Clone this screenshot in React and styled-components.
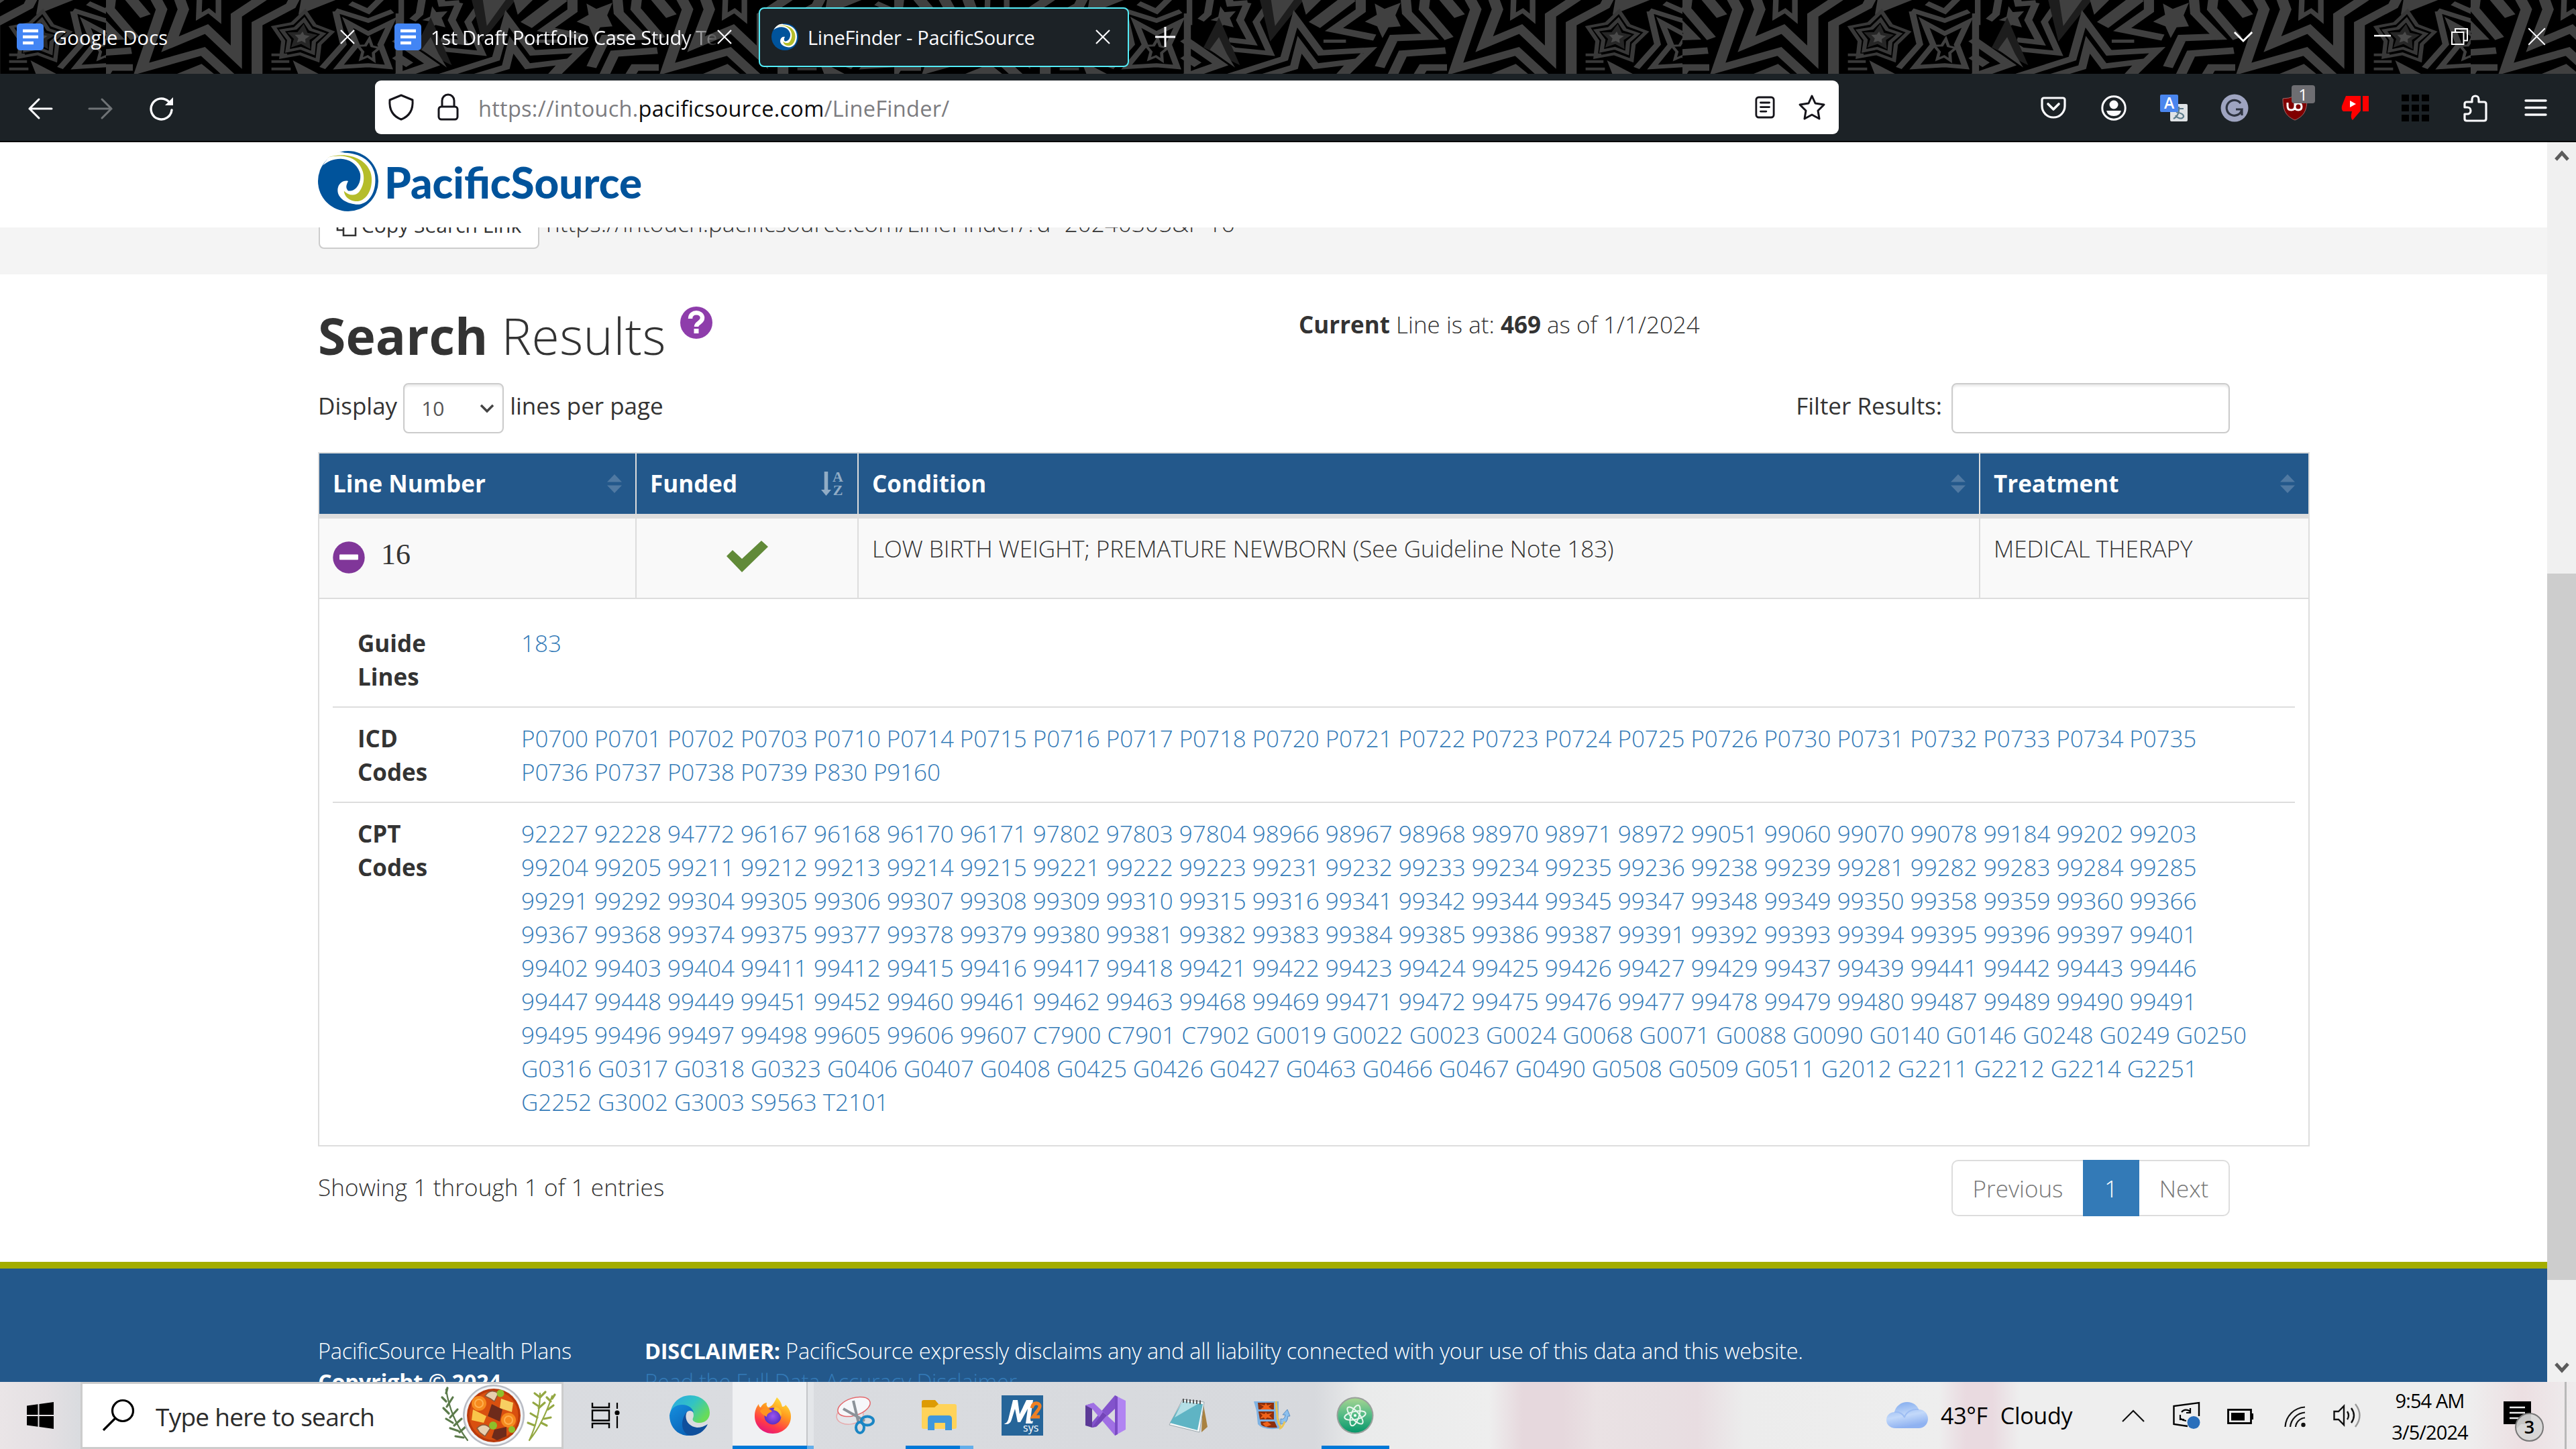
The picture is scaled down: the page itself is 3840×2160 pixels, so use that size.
import React from "react";
import styled, { createGlobalStyle } from "styled-components";

const Global = createGlobalStyle`
  * { box-sizing: border-box; }
  html, body { margin: 0; padding: 0; background: #fff; }
  body { width: 3840px; height: 2160px; overflow: hidden; }
  h1, p, ul { margin: 0; padding: 0; }
  svg { display: block; flex: none; overflow: visible; }
`;

const sans = `"Open Sans", "Noto Sans", "Liberation Sans", sans-serif`;

const Screen = styled.div`
  width: 3840px;
  height: 2160px;
  display: flex;
  flex-direction: column;
  overflow: hidden;
  font-family: ${sans};
  color: #333;
`;

/* ---------- browser chrome ---------- */

const TabStrip = styled.div`
  position: relative;
  height: 110px;
  background: #000;
  display: flex;
  align-items: center;
  color: #fbfbfe;
`;
const ThemeArt = styled.svg`
  position: absolute;
  left: 0;
  top: 0;
`;
const Tab = styled.div`
  position: relative;
  display: flex;
  align-items: center;
  width: ${(p) => p.$w}px;
  height: 89px;
  padding: 0 26px 0 ${(p) => p.$pad}px;
  margin-left: ${(p) => p.$ml || 0}px;
  border-radius: 8px;
  border: 2px solid ${(p) => (p.$active ? "#54ecf7" : "transparent")};
  background: ${(p) => (p.$active ? "#1c2226" : "transparent")};
`;
const TabTitle = styled.span`
  flex: 1;
  margin-left: 14px;
  padding-top: 2px;
  white-space: nowrap;
  overflow: hidden;
  font-size: 29px;
  line-height: 44px;
  letter-spacing: ${(p) => p.$ls || 0}px;
  ${(p) => p.$fade && "-webkit-mask-image: linear-gradient(90deg, #000 88%, rgba(0,0,0,.15) 99%); mask-image: linear-gradient(90deg, #000 88%, rgba(0,0,0,.15) 99%);"}
`;
const StripItem = styled.div`
  position: relative;
  margin-left: ${(p) => p.$ml}px;
  padding-bottom: ${(p) => p.$up || 0}px;
`;

const Toolbar = styled.div`
  height: 102px;
  background: #1c2226;
  border-bottom: 2px solid #070606;
  display: flex;
  align-items: center;
`;
const NavButtons = styled.div`
  width: 559px;
  padding: 3px 0 0 42px;
  display: flex;
  align-items: center;
  gap: 54px;
`;
const UrlBar = styled.div`
  width: 2182px;
  height: 80px;
  border-radius: 9px;
  background: #fff;
  display: flex;
  align-items: center;
  padding: 0 20px;
  gap: 35px;
`;
const UrlText = styled.span`
  flex: 1;
  margin-left: -6px;
  padding-top: 4px;
  font-size: 32.5px;
  line-height: 48px;
  letter-spacing: 0.28px;
  color: #7c7c80;
  white-space: nowrap;
  b { font-weight: 400; color: #0c0c0d; }
`;
const Extensions = styled.div`
  flex: 1;
  display: flex;
  align-items: center;
  justify-content: space-between;
  padding: 1px 39px 0 299px;
`;
const ExtBadge = styled.span`
  position: absolute;
  left: 16px;
  top: -15px;
  width: 35px;
  height: 27px;
  border-radius: 4px;
  background: #6e6e72;
  color: #fff;
  font-size: 24px;
  line-height: 27px;
  text-align: center;
`;
const Ext = styled.div`
  position: relative;
  width: 42px;
  display: flex;
  justify-content: center;
`;

/* ---------- web page ---------- */

const Viewport = styled.div`
  height: 1848px;
  display: flex;
  overflow: hidden;
`;
const Page = styled.div`
  width: 3797px;
  height: 1848px;
  overflow: hidden;
  background: #fff;
`;
const ScrollTrack = styled.div`
  width: 43px;
  background: #f0f0f0;
  display: flex;
  flex-direction: column;
  align-items: center;
  justify-content: space-between;
  padding: 11px 0 12px;
`;
const ScrollThumb = styled.div`
  width: 43px;
  height: 1053px;
  margin-top: 492px;
`;
const ThumbFill = styled.div`
  height: 100%;
  background: #cdcdcd;
`;
const SiteHeader = styled.header`
  height: 127px;
  padding: 13px 0 0 474px;
  background: #fff;
`;
const LinkBand = styled.div`
  height: 70px;
  overflow: hidden;
  background: #f4f4f4;
  padding-left: 475px;
  display: flex;
  align-items: flex-end;
`;
const CopyButton = styled.div`
  width: 329px;
  height: 84px;
  margin-bottom: 38px;
  flex: none;
  border: 2px solid #ccc;
  border-radius: 8px;
  background: #fff;
  display: flex;
  align-items: center;
  justify-content: center;
  gap: 7px;
  padding: 14px 2px 0 0;
  font-size: 30px;
  line-height: 44px;
  white-space: nowrap;
`;
const ShareUrl = styled.span`
  margin: 0 0 51px 10px;
  font-size: 35px;
  font-weight: 300;
  line-height: 50px;
  letter-spacing: 0.1px;
  white-space: nowrap;
`;

const Content = styled.main`
  padding-left: 474px;
  height: 1472px;
`;
const TitleRow = styled.div`
  display: flex;
  height: 162px;
  padding-top: 50px;
  align-items: flex-start;
`;
const Title = styled.h1`
  display: flex;
  align-items: flex-start;
  gap: 21px;
  width: 1462px;
  font-size: 75px;
  font-weight: 300;
  line-height: 82px;
  letter-spacing: 0.5px;
  white-space: nowrap;
  b { font-weight: 700; letter-spacing: 0.1px; }
  svg { margin-top: -2px; }
`;
const Body = styled.p`
  font-size: 35px;
  font-weight: ${(p) => p.$weight || 300};
  line-height: 50px;
  letter-spacing: ${(p) => p.$ls || 0}px;
  white-space: nowrap;
  b { font-weight: 700; }
`;
const Controls = styled.div`
  width: 2850px;
  height: 75px;
  margin-bottom: 28px;
  display: flex;
  align-items: center;
`;
const Label = styled.span`
  font-size: 35px;
  line-height: 50px;
  padding-bottom: 7px;
  white-space: nowrap;
  margin-left: ${(p) => p.$ml || 0};
`;
const Field = styled.div`
  width: ${(p) => p.$w}px;
  height: 75px;
  margin-left: ${(p) => p.$ml}px;
  margin-right: ${(p) => p.$mr || 0}px;
  border: 2px solid #ccc;
  border-radius: 8px;
  box-shadow: inset 0 3px 3px rgba(0, 0, 0, 0.08);
  display: flex;
  align-items: center;
  justify-content: space-between;
  padding: 0 12px 0 25px;
  font-size: 30px;
  font-weight: 400;
  color: #555;
`;

const Table = styled.section`
  width: 2969px;
  border: 2px solid #ddd;
`;
const GridRow = styled.div`
  display: grid;
  grid-template-columns: 473px 331px 1672px 489px;
`;
const HeadRow = styled(GridRow)`
  height: 97px;
  border-bottom: 7px solid #ddd;
  background: #23588b;
`;
const HeadCell = styled.div`
  display: flex;
  align-items: center;
  justify-content: space-between;
  padding: 0 20px;
  border-right: 2px solid #ddd;
  color: #fff;
  font-size: 35px;
  font-weight: 700;
  line-height: 50px;
  &:last-child { border-right: 0; }
`;
const DataRow = styled(GridRow)`
  height: 120px;
  border-bottom: 2px solid #ddd;
  background: #f9f9f9;
`;
const Cell = styled.div`
  display: flex;
  align-items: flex-start;
  justify-content: ${(p) => (p.$center ? "center" : "flex-start")};
  padding: 20px;
  border-right: 2px solid #ddd;
  &:last-child { border-right: 0; }
`;
const LineNo = styled.span`
  margin-left: 24px;
  font-family: "Liberation Serif", "Times New Roman", serif;
  font-size: 44px;
  line-height: 50px;
  padding-top: 9px;
`;
const IconNudge = styled.div`
  padding-top: ${(p) => p.$top}px;
`;
const Details = styled.div`
  padding: 20px;
`;
const DetailRow = styled.div`
  display: flex;
  padding: 21px 0 19px 37px;
  border-top: ${(p) => (p.$first ? "0" : "2px solid #ddd")};
  font-size: 35px;
  line-height: 50px;
`;
const DetailName = styled.div`
  width: 244px;
  font-weight: 700;
`;
const Codes = styled.div`
  font-weight: 300;
  color: #337ab7;
  white-space: nowrap;
`;
const CodeLine = styled.div`
  height: 50px;
  letter-spacing: ${(p) => p.$ls}px;
`;
const TableFoot = styled.div`
  width: 2850px;
  height: 84px;
  margin-top: 20px;
  display: flex;
  align-items: center;
  justify-content: space-between;
  p { padding-bottom: 3px; }
`;
const Pager = styled.div`
  display: flex;
  width: 415px;
  height: 84px;
  border: 2px solid #ddd;
  border-radius: 10px;
`;
const PageLink = styled.span`
  width: ${(p) => p.$w}px;
  margin: ${(p) => (p.$on ? "-2px 0" : "0")};
  background: ${(p) => (p.$on ? "#337ab7" : "transparent")};
  color: ${(p) => (p.$on ? "#fff" : "#777")};
  font-size: 35px;
  font-weight: 300;
  line-height: ${(p) => (p.$on ? 85 : 81)}px;
  text-align: center;
`;
const Footer = styled.footer`
  height: 179px;
  overflow: hidden;
  border-top: 10px solid #a3ad00;
  background: #23588b;
  color: #fff;
  display: flex;
  padding: 100px 0 0 474px;
  font-size: 32.5px;
  font-weight: 300;
  line-height: 46.4px;
  letter-spacing: -0.24px;
  white-space: nowrap;
  b { font-weight: 700; }
`;
const FooterCol = styled.div`
  width: ${(p) => p.$w || "auto"};
`;
const FooterLink = styled.div`
  color: #337ab7;
`;

/* ---------- taskbar ---------- */

const Taskbar = styled.div`
  height: 100px;
  display: flex;
  align-items: center;
  background: linear-gradient(90deg,
    #eae5e7 0, #e4e0e3 70px, #d7dade 130px, #dadce0 1100px, #d7d9dd 1960px, #eaebeb 2030px,
    #eeeeee 2220px, #e6d8dd 2270px, #e6d8dd 2330px, #eae2e4 2380px, #e8dfe2 2480px, #e8dde1 2530px, #ececec 2600px,
    #eeeeee 2890px, #e9dae0 2930px, #e9dae0 2970px, #eeeeee 3010px, #eeeeee 3680px, #ecdfe2 3760px, #eeeced 3840px);
  color: #000;
`;
const StartButton = styled.div`
  width: 120px;
  display: flex;
  justify-content: center;
`;
const SearchBox = styled.div`
  width: 720px;
  height: 100px;
  border: 3px solid #ccc;
  background: #fff;
  display: flex;
  align-items: center;
  padding: 0 6px 0 29px;
  color: #2b2b2b;
  span {
    flex: 1;
    margin-left: 30px;
    padding-top: 3px;
    font-size: 37px;
    line-height: 50px;
    letter-spacing: -0.75px;
    white-space: nowrap;
  }
`;
const AppSlot = styled.div`
  position: relative;
  width: ${(p) => p.$w || 124}px;
  height: 100px;
  display: flex;
  align-items: center;
  justify-content: center;
  background: ${(p) => (p.$active ? "linear-gradient(90deg, transparent 2px, #f0f1f3 2px, #f0f1f3 112px, #c4c6c9 112px, #c4c6c9 114px, #e4e6e9 114px, #e4e6e9 123px, transparent 123px)" : "none")};
`;
const RunBar = styled.i`
  position: absolute;
  bottom: 0;
  left: ${(p) => p.$x}px;
  width: ${(p) => p.$w}px;
  height: 5px;
  background: ${(p) => (p.$soft ? "#63aeea" : "#0078d7")};
`;
const Tray = styled.div`
  margin-left: auto;
  width: 1028px;
  height: 100px;
  display: flex;
  align-items: center;
  white-space: nowrap;
`;
const TrayItem = styled.div`
  position: relative;
  margin-left: ${(p) => p.$ml || 0}px;
  padding-top: ${(p) => p.$down || 0}px;
`;
const Weather = styled.div`
  width: 290px;
  display: flex;
  align-items: center;
  font-size: 34px;
  line-height: 50px;
  letter-spacing: -0.3px;
  span { margin-left: 19px; }
`;
const Clock = styled.div`
  width: 136px;
  margin-left: 34px;
  padding-top: 2px;
  text-align: center;
  font-size: 29px;
  line-height: 47px;
  letter-spacing: -0.9px;
`;
const NoteBadge = styled.span`
  position: absolute;
  left: 17px;
  top: 17px;
  width: 43px;
  height: 43px;
  border-radius: 50%;
  border: 2px solid #777;
  background: rgba(214, 214, 214, 0.92);
  font-size: 27px;
  font-weight: 600;
  line-height: 38px;
  text-align: center;
`;
const PeekLine = styled.div`
  width: 3px;
  height: 100px;
  margin-left: 49px;
  background: #b9b9b9;
`;

/* ---------- drawings ---------- */

function starPoints(cx, cy, rx, ry, inner = 0.5) {
  const pts = [];
  for (let i = 0; i < 10; i++) {
    const k = i % 2 ? inner : 1;
    const a = -Math.PI / 2 + (i * Math.PI) / 5 + 0.1;
    pts.push(`${cx + Math.cos(a) * rx * k},${cy + Math.sin(a) * ry * k}`);
  }
  return pts.join(" ");
}

function StarTile() {
  return (
    <g fill="none" stroke="#404040" strokeWidth="29" strokeMiterlimit="8">
      <path d="M6-10V112" strokeWidth="16" />
      <path d="M38 90L58 62L66-10M118-8L122 18L172 12M172 12L150 90L184 190L118 178" strokeWidth="22" />
      <path d="M222 40L196 98L236 238L132 222L100 190" strokeWidth="20" />
      <path d="M94 28L106 54L138 50L121 80L132 122L104 112L80 132L88 96L66 90L88 74Z" fill="#404040" stroke="none" />
      <path d="M206-5H334L236 186Z" fill="#1d1d1d" stroke="none" />
      <path d="M238-5H306L250 116Z" fill="#404040" stroke="none" />
      <path d="M-10 175L94 288L-10 345M-10 250L30 290" />
      <path d="M90 78L46 212L150 292Z" fill="#1d1d1d" stroke="none" />
      <path d="M90 166L64 222L136 302L112 240Z" fill="#404040" stroke="none" />
      <path d="M120 340L276 262L308 84L380 236L518 224L440 345" strokeWidth="24" />
      <path d="M210 345L304 300L320 200L366 296L470 276L430 345" strokeWidth="24" />
      <path d="M325-5H384L338 66Z" fill="#404040" stroke="none" />
      <path d="M362 112L464-10" strokeWidth="42" />
      <path d="M388 184H452" strokeWidth="14" />
      <path d="M494-10V48L418 132L534 168" />
      <path d="M622-10L626 58L692 164L588 170L548 300" />
      <path d="M534 16L562 40L608 12L593 68L608 118L573 122L556 170L541 118L506 97L540 66Z" fill="#404040" stroke="none" />
      <path d="M678-10L674 40L746 172" />
      <path d="M732-10L776 72" strokeWidth="34" />
      <path d="M582 345L614 240L736 226M655 345L672 302H740" />
      <path d="M804-10L822 42L764 308L940 230L1020 345" strokeWidth="32" />
      <path d="M872-10L884 42L846 198L950 130L1035 256L1035 68L1110-10" strokeWidth="32" />
      <path d="M930-10L928 74L956 48L984 84V-10" strokeWidth="16" />
      <path d="M860 334L936 286L974 334Z" fill="#404040" stroke="none" />
      <path d="M1094 345V106L1190 26L1202-10" strokeWidth="31" />
      <path d="M1212 66L1220-5H1326Z" fill="#404040" stroke="none" />
      <g stroke="#383838" strokeWidth="12">
        <polygon points={starPoints(1222, 168, 34, 44)} fill="#4a4a4a" stroke="#262626" />
        <polygon points={starPoints(1222, 168, 62, 80, 0.6)} />
        <polygon points={starPoints(1222, 168, 88, 118, 0.62)} />
        <path d="M1135 245H1180M1135 275H1186M1135 308H1190" />
      </g>
      <path d="M1196 270L1274 334H1212Z" fill="#404040" stroke="none" />
      <path d="M1318 50L1340 198L1280 304M1318 46L1411 92L1480 50" strokeWidth="19" />
      <path d="M1352 100L1378 200L1326 300L1411 292L1470 300L1446 200L1476 100L1411 150Z" strokeWidth="18" />
      <polygon points={starPoints(1411, 226, 32, 52)} strokeWidth="9" />
      <path d="M1499 60V345M1360 14L1411 50L1450-10" strokeWidth="20" />
    </g>
  );
}

function ThemePattern() {
  const origins = [-1017, 158, 1333, 2508, 3683];
  return (
    <ThemeArt width="3840" height="110" viewBox="0 0 3840 110" style={undefined}>
      <defs>
        <g id="stars"><StarTile /></g>
        <clipPath id="panel"><rect width="1175" height="110" /></clipPath>
      </defs>
      {origins.map((x) => (
        <g key={x} transform={`translate(${x} 0)`} clipPath="url(#panel)">
          <g transform="translate(-347 0) scale(.523 .3333)"><use href="#stars" /></g>
          <g transform="translate(437 0) scale(.523 .3333)"><use href="#stars" /></g>
        </g>
      ))}
    </ThemeArt>
  );
}

const Swirl = ({ size }) => (
  <svg width={size} height={size} viewBox="0 0 100 100">
    <circle cx="50" cy="50" r="50" fill="#00539b" />
    <path fill="#fff" d="M8 24C18 6 34-1 44 3C76 4 95 22 95 48C95 76 78 92 60 88C44 86 30 76 33 61C35 53 43 48 50 50C46 58 46 62 50 66C62 68 72 54 70 38C66 22 52 13 37 13C26 13 16 17 8 24Z" />
    <path fill="#b5bd2b" d="M15 11C50-1 89 14 89 48C89 70 76 86 60 83C50 81 44 75 43 66C50 74 62 75 68 68C80 52 78 30 63 17C52 8 34 6 15 11Z" />
  </svg>
);

const BrandLogo = () => (
  <svg width="484" height="100" viewBox="0 0 484 100">
    <g transform="scale(.9)"><Swirl size={100} /></g>
    <text x="99" y="71" fill="#00539b" fontFamily="Lato, 'Open Sans', sans-serif" fontWeight="900" fontSize="65" textLength="384" lengthAdjust="spacingAndGlyphs">PacificSource</text>
  </svg>
);

const DocsIcon = () => (
  <svg width="40" height="40" viewBox="0 0 40 40">
    <rect width="40" height="40" rx="5" fill="#4285f4" />
    <path d="M9 11H32M9 20H32M9 29H25" stroke="#fff" strokeWidth="4.4" />
  </svg>
);
const Cross = ({ s = 22, w = 2.2 }) => (
  <svg width={s} height={s} viewBox="0 0 22 22"><path d="M1 1L21 21M21 1L1 21" stroke="#fbfbfe" strokeWidth={w} /></svg>
);
const Arrow = ({ flip, color }) => (
  <svg width="36" height="32" viewBox="0 0 36 32">
    <path transform={flip ? "translate(36 0) scale(-1 1)" : undefined} d="M16 2L2 16L16 30M2 16H35" fill="none" stroke={color} strokeWidth="3" strokeLinecap="round" />
  </svg>
);
const Reload = () => (
  <svg width="38" height="38" viewBox="0 0 38 38">
    <path d="M34 21A15.5 15.5 0 1 1 29 8" fill="none" stroke="#fbfbfe" strokeWidth="3.4" strokeLinecap="round" />
    <path d="M36 2V14H24Z" fill="#fbfbfe" />
  </svg>
);
const ShieldOutline = () => (
  <svg width="38" height="40" viewBox="0 0 38 40">
    <path d="M19 2L36 9C37 22 32 33 19 38C6 33 1 22 2 9Z" fill="none" stroke="#15141a" strokeWidth="3" strokeLinejoin="round" />
  </svg>
);
const Lock = () => (
  <svg width="32" height="40" viewBox="0 0 32 40">
    <path d="M7 19V10A9 9 0 0 1 25 10V19" fill="none" stroke="#15141a" strokeWidth="3" />
    <rect x="2" y="19" width="28" height="19" rx="4" fill="none" stroke="#15141a" strokeWidth="3" />
  </svg>
);
const Reader = () => (
  <svg width="30" height="36" viewBox="0 0 32 36">
    <rect x="2" y="2" width="28" height="32" rx="4" fill="none" stroke="#15141a" strokeWidth="3" />
    <path d="M9 10.500H23M9 17.500H23M9 24.500H18" stroke="#15141a" strokeWidth="3" strokeLinecap="round" />
  </svg>
);
const StarOutline = () => (
  <svg width="40" height="40" viewBox="0 0 40 40">
    <path d="M20 3L25 14L38 16L29 25L31 37L20 31L9 37L11 25L2 16L15 14Z" fill="none" stroke="#15141a" strokeWidth="3" strokeLinejoin="round" />
  </svg>
);
const Pocket = () => (
  <svg width="38" height="34" viewBox="0 0 38 34">
    <path d="M5 2H33Q36 2 36 5V14A17 17 0 0 1 2 14V5Q2 2 5 2Z" fill="none" stroke="#fbfbfe" strokeWidth="3.200" />
    <path d="M11 11L19 19L27 11" fill="none" stroke="#fbfbfe" strokeWidth="3.600" strokeLinecap="round" strokeLinejoin="round" />
  </svg>
);
const Account = () => (
  <svg width="38" height="38" viewBox="0 0 38 38">
    <circle cx="19" cy="19" r="17.200" fill="none" stroke="#fbfbfe" strokeWidth="3" />
    <circle cx="19" cy="14" r="6.500" fill="#fbfbfe" />
    <path d="M8 23H30Q28 31 19 31Q10 31 8 23Z" fill="#fbfbfe" />
  </svg>
);
const Translate = () => (
  <svg width="41" height="40" viewBox="0 0 41 40">
    <rect x="15" y="14" width="26" height="26" rx="2" fill="#dfe3e6" />
    <path d="M22 21H35M28 18V24C27 30 24 34 20 36M24 26C29 27 36 29 35 33C33 37 26 36 23 31" fill="none" stroke="#5c7c8c" strokeWidth="2.200" />
    <rect width="27" height="26" rx="2" fill="#4a86ee" />
    <text x="13.500" y="21" textAnchor="middle" fill="#fff" fontFamily="Open Sans, sans-serif" fontWeight="600" fontSize="23">A</text>
  </svg>
);
const Grammar = () => (
  <svg width="42" height="42" viewBox="0 0 42 42">
    <circle cx="21" cy="21" r="20.500" fill="#9ea4c0" />
    <path d="M30 14A11.500 11.500 0 1 0 32 23H23M32 23V32" fill="none" stroke="#2e3440" strokeWidth="3.200" />
  </svg>
);
const Ublock = () => (
  <svg width="38" height="38" viewBox="0 0 38 38">
    <path d="M19 1Q28 5 37 5C37 22 33 31 19 37C5 31 1 22 1 5Q10 5 19 1Z" fill="#800000" stroke="#a06a6a" strokeWidth="1" />
    <path d="M8 11V16Q8 22 13.500 22Q19 22 19 16V8M19 17Q19 22 24 22Q29 22 29 17Q29 12 24 12Q19 12 19 17" fill="none" stroke="#fff" strokeWidth="3" />
  </svg>
);
const ThumbDown = () => (
  <svg width="41" height="38" viewBox="0 0 41 38">
    <path d="M7 1H29V23L17 37Q13 34 16 24H3Q0 22 1 16Z" fill="#f00" />
    <rect x="32" y="1" width="9" height="23" fill="#f00" />
    <path d="M13 8L22 13L13 18Z" fill="#fff" />
  </svg>
);
const GridDots = () => (
  <svg width="41" height="40" viewBox="0 0 41 40">
    {[0, 15, 30].map((y) => [0, 15, 30].map((x) => <rect key={`${x}-${y}`} x={x} y={y} width="11" height="10" fill="#000" />))}
  </svg>
);
const Puzzle = () => (
  <svg width="36" height="42" viewBox="0 0 36 42">
    <path d="M13 12V8A5 5 0 0 1 23 8V12H31Q34 12 34 15V37Q34 40 31 40H5Q2 40 2 37V30H6A5 5 0 0 0 6 20H2V15Q2 12 5 12Z" fill="none" stroke="#fbfbfe" strokeWidth="3.200" strokeLinejoin="round" />
  </svg>
);
const Burger = () => (
  <svg width="32" height="28" viewBox="0 0 32 28"><path d="M1 3H31M1 13.500H31M1 24H31" stroke="#fbfbfe" strokeWidth="3.400" strokeLinecap="round" /></svg>
);
const ScrollArrow = ({ down }) => (
  <svg width="22" height="18" viewBox="0 0 22 18">
    <path d={down ? "M2 3L11 13L20 3" : "M2 15L11 5L20 15"} fill="none" stroke="#5b5b5b" strokeWidth="5" />
  </svg>
);
const CopyIcon = () => (
  <svg width="32" height="34" viewBox="0 0 32 34">
    <path d="M12 10H30V32H12ZM12 24H3V3H20V10" fill="none" stroke="#333" strokeWidth="2.600" />
  </svg>
);
const HelpIcon = () => (
  <svg width="48" height="48" viewBox="0 0 48 48">
    <circle cx="24" cy="24" r="24" fill="#8e3dab" />
    <path d="M15 18C15 6 33 7 33 17C33 24 24 24 24 30" fill="none" stroke="#fff" strokeWidth="6.500" />
    <rect x="20.500" y="33" width="7" height="7" fill="#fff" />
  </svg>
);
const MinusIcon = () => (
  <svg width="48" height="48" viewBox="0 0 48 48">
    <circle cx="24" cy="24" r="23.700" fill="#803699" />
    <rect x="10" y="19.500" width="28" height="8" rx="1" fill="#fff" />
  </svg>
);
const CheckIcon = () => (
  <svg width="62" height="47" viewBox="0 0 62 47">
    <path d="M0 23L9 14L23 27L52 0L62 9L23 47Z" fill="#618a38" />
  </svg>
);
const SortIcon = () => (
  <svg width="22" height="28" viewBox="0 0 22 28"><path d="M11 0L22 11.500H0ZM11 28L0 16.500H22Z" fill="#5079a2" /></svg>
);
const SortAz = () => (
  <svg width="34" height="38" viewBox="0 0 34 38">
    <path d="M7.500 1V30" stroke="#91acc5" strokeWidth="5.500" />
    <path d="M0 28H15L7.500 37Z" fill="#91acc5" />
    <text x="25" y="15.500" textAnchor="middle" fill="#91acc5" fontFamily="Liberation Serif, serif" fontWeight="700" fontSize="22">A</text>
    <text x="25" y="36" textAnchor="middle" fill="#91acc5" fontFamily="Liberation Serif, serif" fontWeight="700" fontSize="22">Z</text>
  </svg>
);
const ChevronDown = ({ color = "#444", w = 22, h = 13, sw = 3.500 }) => (
  <svg width={w} height={h} viewBox="0 0 22 13"><path d="M2 2L11 11L20 2" fill="none" stroke={color} strokeWidth={sw} /></svg>
);

const WinLogo = () => (
  <svg width="40" height="40" viewBox="0 0 40 40">
    <path d="M0 5.500L16.500 3.200V19H0ZM18.500 3L40 0V19H18.500ZM0 21H16.500V36.800L0 34.500ZM18.500 21H40V40L18.500 37Z" fill="#000" />
  </svg>
);
const SearchIcon = () => (
  <svg width="50" height="50" viewBox="0 0 50 50">
    <circle cx="31" cy="18" r="15.500" fill="none" stroke="#000" strokeWidth="3.200" />
    <path d="M20 29L2 47" stroke="#000" strokeWidth="3.200" />
  </svg>
);
const Twig = ({ d, color, leaves }) => (
  <g fill="none" stroke={color} strokeLinecap="round">
    <path d={d} strokeWidth="2.200" />
    <path d={leaves} strokeWidth="3.200" />
  </g>
);
const StewArt = () => (
  <svg width="174" height="94" viewBox="0 0 174 94">
    <Twig color="#5b7a4a" d="M8 8Q14 50 40 84" leaves="M8 26L2 20M9 34L18 20M12 44L4 36M14 50L25 38M18 58L8 52M20 62L31 52M26 70L14 66M28 72L37 64M34 80L22 78M8 14L10 6" />
    <Twig color="#94a843" d="M148 14Q148 50 132 84M132 84Q152 60 166 18" leaves="M148 20L140 14M148 20L156 12M147 34L138 28M146 36L155 28M144 50L134 44M160 38L168 32M154 52L164 50M150 58L158 62M140 62L130 58M164 26L158 20M166 22L170 16" />
    <circle cx="79" cy="47" r="46" fill="#b9bcc4" />
    <circle cx="79" cy="47" r="43.500" fill="#f3f4f6" />
    <circle cx="79" cy="47" r="40" fill="#b93a0b" />
    <circle cx="79" cy="47" r="36.500" fill="#d9500f" />
    <circle cx="57" cy="29" r="11" fill="#f68a1e" /><circle cx="57" cy="29" r="6" fill="none" stroke="#ffb04f" strokeWidth="2" />
    <circle cx="101" cy="54" r="11" fill="#f68a1e" /><circle cx="101" cy="54" r="6" fill="none" stroke="#ffb04f" strokeWidth="2" />
    <path d="M90 22L108 28L106 42L88 36Z" fill="#f7cf62" />
    <path d="M48 38L68 48L64 58L46 54Z" fill="#f9c64a" />
    <path d="M66 18Q74 6 86 14L80 26L74 22Z" fill="#e7cfae" stroke="#8a5a3a" strokeWidth="1.500" />
    <path d="M54 66Q64 56 74 66L66 78L58 72Z" fill="#e7cfae" stroke="#8a5a3a" strokeWidth="1.500" />
    <path d="M76 30L92 38L88 56L70 48Z" fill="#6e2b1b" /><path d="M80 68L98 64L98 78L84 84L76 80Z" fill="#6e2b1b" />
    <circle cx="89" cy="14" r="5.500" fill="#8fbf2a" /><circle cx="78" cy="62" r="6" fill="#8fbf2a" /><circle cx="106" cy="68" r="5" fill="#8fbf2a" />
  </svg>
);
const TaskView = () => (
  <svg width="42" height="40" viewBox="0 0 42 40">
    <path d="M1 1V8H26V1M1 39V32H26V39M1 12.500H26V27.500H1Z" fill="none" stroke="#000" strokeWidth="2.400" />
    <path d="M38 1V10M38 21V39" stroke="#000" strokeWidth="2.200" /><circle cx="38" cy="16" r="3.600" fill="#000" />
  </svg>
);
const EdgeIcon = () => (
  <svg width="60" height="60" viewBox="0 0 60 60">
    <defs>
      <linearGradient id="e1" x1="0" y1="0" x2="1" y2=".6"><stop offset="0" stopColor="#2aa6e6" /><stop offset=".55" stopColor="#32c3c4" /><stop offset="1" stopColor="#68dc58" /></linearGradient>
      <linearGradient id="e2" x1="0" y1="0" x2=".6" y2="1"><stop offset="0" stopColor="#1590df" /><stop offset="1" stopColor="#0a63b8" /></linearGradient>
    </defs>
    <path d="M1 27C4 8 18 0 31 0C48 0 60 12 60 26C60 36 52 41 45 41C38 41 33 38 35 34C38 28 34 16 20 15C11 15 4 20 1 27Z" fill="url(#e1)" />
    <path d="M0 30C1 20 9 14 19 14C29 14 35 20 36 26C33 22 28 22 25 26C18 36 24 56 36 59C14 64 0 48 0 30Z" fill="url(#e2)" />
    <path d="M27 23C20 34 28 47 41 48C47 48 52 46 57 43C52 54 42 60 31 60C18 58 14 38 27 23Z" fill="#0f4f9c" />
  </svg>
);
const FirefoxIcon = () => (
  <svg width="54" height="54" viewBox="0 0 54 54">
    <defs>
      <linearGradient id="f1" x1=".8" y1="0" x2=".3" y2="1"><stop offset="0" stopColor="#ffe93f" /><stop offset=".4" stopColor="#ff9a1e" /><stop offset=".75" stopColor="#ff3b47" /><stop offset="1" stopColor="#e3157f" /></linearGradient>
      <radialGradient id="f2"><stop offset="0" stopColor="#9a55f0" /><stop offset="1" stopColor="#5b2fc4" /></radialGradient>
    </defs>
    <path d="M33 0C38 5 40 9 41 14C44 14 46 12 46 11C54 19 54 26 54 29C54 43 42 54 27 54C12 54 0 43 0 28C0 19 3 14 6 10C6 13 8 15 9 15C12 9 16 8 18 8C17 11 18 13 20 15C26 14 29 8 33 0Z" fill="url(#f1)" />
    <circle cx="27" cy="28" r="12.500" fill="url(#f2)" />
    <path d="M8 20C14 14 22 16 26 21C22 23 18 24 18 29C13 26 9 24 8 20Z" fill="#ff9420" />
    <path d="M30 14C38 15 42 22 39 30C38 24 34 20 28 19Z" fill="#ffc02e" />
  </svg>
);
const SnipIcon = () => (
  <svg width="58" height="56" viewBox="0 0 58 56">
    <ellipse cx="20" cy="28" rx="20" ry="13" fill="#e4e5e9" stroke="#e7a9ab" strokeWidth="1.500" transform="rotate(-8 20 28)" />
    <ellipse cx="26" cy="15" rx="25" ry="13" fill="#f6f7fa" stroke="#e4686c" strokeWidth="1.500" transform="rotate(-18 26 15)" />
    <path d="M25 6L33 40M10 18L42 36" stroke="#8c9299" strokeWidth="4" />
    <ellipse cx="46" cy="36" rx="9" ry="6.500" fill="none" stroke="#1b86c4" strokeWidth="4" />
    <ellipse cx="35" cy="46" rx="6" ry="8" fill="none" stroke="#1b86c4" strokeWidth="4" />
  </svg>
);
const FolderIcon = () => (
  <svg width="54" height="46" viewBox="0 0 54 46">
    <path d="M1 3Q1 0 4 0H21L26 6V12H1Z" fill="#dd9b04" />
    <path d="M1 11H20L26 6H50Q53 6 53 9V40Q53 43 50 43H4Q1 43 1 40Z" fill="#ffd35a" />
    <path d="M10 45V28Q10 23 15 23H41Q46 23 46 28V45H36V34H20V45Z" fill="#3f97dc" />
  </svg>
);
const M2Icon = () => (
  <svg width="62" height="60" viewBox="0 0 62 60">
    <rect width="62" height="60" fill="#266599" />
    <path d="M4 42Q8 42 10 36L17 7H24L27 28L37 7H47L43 36Q43 40 47 38L46 42H36L39 20L28 40H24L20 20L15 36Q13 44 5 43Z" fill="#fff" />
    <path d="M45 19Q47 11 53 12Q60 14 55 21L47 32H57" fill="none" stroke="#f08024" strokeWidth="5" />
    <text x="32" y="54" fill="#fff" fontFamily="Open Sans, sans-serif" fontSize="16">sys</text>
  </svg>
);
const VsIcon = () => (
  <svg width="60" height="60" viewBox="0 0 60 60">
    <path d="M0 15L10 12V48L0 45Z" fill="#5b3a96" />
    <path d="M10 48L10 40L44 0V20L16 47Z" fill="#8353cc" />
    <path d="M0 15L12 11L44 41V60L10 20Z" fill="#a070e4" />
    <path d="M10 48L17 46L32 30L26 25Z" fill="#7345b8" />
    <path d="M44 0L60 8V51L44 60Z" fill="#b184f2" />
    <path d="M44 0L48 2V58L44 60Z" fill="#7b4cc4" />
  </svg>
);
const NotepadIcon = () => (
  <svg width="58" height="54" viewBox="0 0 58 54">
    <path d="M50 6L57 44L48 52Z" fill="#a9813f" />
    <path d="M20 3L52 7L45 52L0 41Z" fill="#f5f7f8" stroke="#9aa7ad" strokeWidth="1" />
    <path d="M20 6L50 10L42 49L1 38Z" fill="#5fb4c4" />
    <path d="M20 6L44 9L8 30Z" fill="#b4dfe6" />
    <path d="M21 2V8M26 2.500V8.500M31 3V9M36 3.500V9.500M41 4V10M46 4.500V10.500" stroke="#555" strokeWidth="2" />
  </svg>
);
const MovieIcon = () => (
  <svg width="54" height="42" viewBox="0 0 54 42">
    <path d="M0 0H37V24L42 40Q14 44 6 34L4 14Z" fill="#7fb2e2" />
    <path d="M40 26Q46 28 47 20L43 20L50 12L54 22L51 22Q50 34 40 34Z" fill="#8cc0ee" stroke="#5a8fc4" strokeWidth="1" />
    <path d="M6 2H30V12H7ZM7 15H30V27H9ZM10 30H31L35 39Q16 40 11 35Z" fill="#8c2f0c" />
    <path d="M18 2L20 6L27 4L22 8L27 12H10L15 8L9 4L16 6ZM18 16L20 19L28 17L23 21L28 26L20 24L17 27L15 24L9 26L13 21L9 17L16 19ZM20 30L26 35L18 38L13 33Z" fill="#f0621a" />
    <path d="M33 0L35 22Q36 34 42 40M46 30Q44 38 38 41" fill="none" stroke="#e9c455" strokeWidth="3" />
  </svg>
);
const AtomIcon = () => (
  <svg width="56" height="56" viewBox="0 0 56 56">
    <defs><linearGradient id="at" x1="0" y1="0" x2="0" y2="1"><stop offset="0" stopColor="#a5d491" /><stop offset=".5" stopColor="#52ba85" /><stop offset="1" stopColor="#07976a" /></linearGradient></defs>
    <circle cx="28" cy="28" r="27.500" fill="#9aa09c" />
    <circle cx="28" cy="28" r="25.500" fill="url(#at)" />
    <g fill="none" stroke="#e9f7ee" strokeWidth="2">
      <ellipse cx="28" cy="28" rx="6" ry="16" transform="rotate(18 28 28)" />
      <ellipse cx="28" cy="28" rx="6" ry="16" transform="rotate(78 28 28)" />
      <ellipse cx="28" cy="28" rx="6" ry="16" transform="rotate(138 28 28)" />
    </g>
    <circle cx="28" cy="28" r="2" fill="#fff" />
  </svg>
);
const CloudIcon = () => (
  <svg width="62" height="40" viewBox="0 0 62 40">
    <defs><linearGradient id="cl" x1="0" y1="0" x2=".3" y2="1"><stop offset="0" stopColor="#7ba6ec" /><stop offset=".6" stopColor="#c3d9fa" /><stop offset="1" stopColor="#8fb2f1" /></linearGradient></defs>
    <path d="M14 39C5 39 0 33 0 27C0 20 5 15 12 15C14 6 22 0 31 0C40 0 46 5 48 11C56 11 62 17 62 25C62 33 56 39 48 39Z" fill="url(#cl)" />
    <path d="M12 15C20 14 26 19 27 23C29 15 38 10 48 11" fill="none" stroke="#9dbdf3" strokeWidth="2" />
  </svg>
);
const TrayMonitor = () => (
  <svg width="42" height="42" viewBox="0 0 42 42">
    <path d="M22 37L1.500 34V7L39 2V22" fill="none" stroke="#000" strokeWidth="2.400" />
    <path d="M13 16Q18 10 26 15M26 10V17H20M11 20V27H17M12 26Q16 29 20 29" fill="none" stroke="#000" strokeWidth="2.200" />
    <circle cx="31" cy="31.500" r="9.500" fill="#2a6fbb" />
  </svg>
);
const Battery = () => (
  <svg width="40" height="24" viewBox="0 0 40 24">
    <rect x="1.500" y="1.500" width="34" height="20" fill="none" stroke="#000" strokeWidth="2.800" />
    <rect x="6" y="6" width="20" height="11.500" fill="#000" /><rect x="36" y="7" width="3" height="9" fill="#000" />
  </svg>
);
const Wifi = () => (
  <svg width="34" height="32" viewBox="0 0 34 32" fill="none" stroke="#111" strokeWidth="2.200">
    <path d="M1.500 31A31 31 0 0 1 31 1.500M9 31A24 24 0 0 1 31 9.500M17 31A15 15 0 0 1 31 17.500" />
    <circle cx="28.500" cy="28" r="3.200" fill="#111" stroke="none" />
  </svg>
);
const Speaker = () => (
  <svg width="42" height="38" viewBox="0 0 42 38" fill="none" stroke="#111" strokeWidth="2.400">
    <path d="M1.500 13H8L16 5V33L8 25H1.500Z" />
    <path d="M21 13Q25 19 21 25M27 8Q35 19 27 30" />
    <path d="M33 2Q46 19 33 36" stroke="#999" />
  </svg>
);
const NoteIcon = () => (
  <svg width="42" height="42" viewBox="0 0 42 42">
    <path d="M0 0H41V34H26L18 42V34H0Z" fill="#000" />
    <path d="M9 9H32M9 17H32M9 25H24" stroke="#eee" strokeWidth="2.400" />
  </svg>
);

/* ---------- data ---------- */

const codeSpacing = { P: -0.085, G: -0.055 };

const details = [
  { name: ["Guide", "Lines"], codes: ["183"] },
  {
    name: ["ICD", "Codes"],
    codes: [
      "P0700 P0701 P0702 P0703 P0710 P0714 P0715 P0716 P0717 P0718 P0720 P0721 P0722 P0723 P0724 P0725 P0726 P0730 P0731 P0732 P0733 P0734 P0735",
      "P0736 P0737 P0738 P0739 P830 P9160",
    ],
  },
  {
    name: ["CPT", "Codes"],
    codes: [
      "92227 92228 94772 96167 96168 96170 96171 97802 97803 97804 98966 98967 98968 98970 98971 98972 99051 99060 99070 99078 99184 99202 99203",
      "99204 99205 99211 99212 99213 99214 99215 99221 99222 99223 99231 99232 99233 99234 99235 99236 99238 99239 99281 99282 99283 99284 99285",
      "99291 99292 99304 99305 99306 99307 99308 99309 99310 99315 99316 99341 99342 99344 99345 99347 99348 99349 99350 99358 99359 99360 99366",
      "99367 99368 99374 99375 99377 99378 99379 99380 99381 99382 99383 99384 99385 99386 99387 99391 99392 99393 99394 99395 99396 99397 99401",
      "99402 99403 99404 99411 99412 99415 99416 99417 99418 99421 99422 99423 99424 99425 99426 99427 99429 99437 99439 99441 99442 99443 99446",
      "99447 99448 99449 99451 99452 99460 99461 99462 99463 99468 99469 99471 99472 99475 99476 99477 99478 99479 99480 99487 99489 99490 99491",
      "99495 99496 99497 99498 99605 99606 99607 C7900 C7901 C7902 G0019 G0022 G0023 G0024 G0068 G0071 G0088 G0090 G0140 G0146 G0248 G0249 G0250",
      "G0316 G0317 G0318 G0323 G0406 G0407 G0408 G0425 G0426 G0427 G0463 G0466 G0467 G0490 G0508 G0509 G0511 G2012 G2211 G2212 G2214 G2251",
      "G2252 G3002 G3003 S9563 T2101",
    ],
  },
];

export default function App() {
  return (
    <Screen>
      <Global />
      <TabStrip>
        <ThemePattern />
        <Tab $w={557} $pad={23}>
          <DocsIcon /><TabTitle $ls={0.2}>Google Docs</TabTitle><Cross />
        </Tab>
        <Tab $w={562} $pad={29}>
          <DocsIcon /><TabTitle $fade $ls={-0.3}>1st Draft Portfolio Case Study Template</TabTitle><Cross />
        </Tab>
        <Tab $active $w={552} $pad={17} $ml={12}>
          <Swirl size={40} /><TabTitle $ls={-0.28}>LineFinder - PacificSource</TabTitle><Cross />
        </Tab>
        <StripItem $ml={38}>
          <svg width="32" height="32" viewBox="0 0 32 32"><path d="M16 1V31M1 16H31" stroke="#fbfbfe" strokeWidth="3" /></svg>
        </StripItem>
        <StripItem $ml={1575} $up={2}><ChevronDown color="#fff" w={32} h={19} sw={2} /></StripItem>
        <StripItem $ml={179} $up={4}>
          <svg width="25" height="3" viewBox="0 0 25 3"><rect width="25" height="2.500" fill="#fff" /></svg>
        </StripItem>
        <StripItem $ml={90} $up={2}>
          <svg width="25" height="25" viewBox="0 0 25 25"><path d="M1 6H18.500V24H1ZM6 6V1H24V18.500H18.500" fill="none" stroke="#fff" strokeWidth="2" /></svg>
        </StripItem>
        <StripItem $ml={89} $up={2}><Cross s={27} w={1.500} /></StripItem>
      </TabStrip>
      <Toolbar>
        <NavButtons><Arrow color="#fbfbfe" /><Arrow flip color="#6f7376" /><Reload /></NavButtons>
        <UrlBar>
          <ShieldOutline /><Lock />
          <UrlText>https://intouch.<b>pacificsource.com</b>/LineFinder/</UrlText>
          <Reader /><StarOutline />
        </UrlBar>
        <Extensions>
          <Ext><Pocket /></Ext>
          <Ext><Account /></Ext>
          <Ext><Translate /></Ext>
          <Ext><Grammar /></Ext>
          <Ext><Ublock /><ExtBadge>1</ExtBadge></Ext>
          <Ext><ThumbDown /></Ext>
          <Ext><GridDots /></Ext>
          <Ext><Puzzle /></Ext>
          <Ext><Burger /></Ext>
        </Extensions>
      </Toolbar>

      <Viewport>
        <Page>
          <SiteHeader><BrandLogo /></SiteHeader>
          <LinkBand>
            <CopyButton><CopyIcon />Copy Search Link</CopyButton>
            <ShareUrl>https://intouch.pacificsource.com/LineFinder/?d=20240305&amp;l=16</ShareUrl>
          </LinkBand>
          <Content>
            <TitleRow>
              <Title><span><b>Search</b> Results</span><HelpIcon /></Title>
              <Body><b>Current</b> Line is at: <b>469</b> as of 1/1/2024</Body>
            </TitleRow>
            <Controls>
              <Label>Display</Label>
              <Field $w={150} $ml={9} $mr={9}>10<ChevronDown /></Field>
              <Label>lines per page</Label>
              <Label $ml="auto">Filter Results:</Label>
              <Field $w={415} $ml={14} />
            </Controls>
            <Table>
              <HeadRow>
                <HeadCell><span>Line Number</span><SortIcon /></HeadCell>
                <HeadCell><span>Funded</span><SortAz /></HeadCell>
                <HeadCell><span>Condition</span><SortIcon /></HeadCell>
                <HeadCell><span>Treatment</span><SortIcon /></HeadCell>
              </HeadRow>
              <DataRow>
                <Cell><IconNudge $top={14}><MinusIcon /></IconNudge><LineNo>16</LineNo></Cell>
                <Cell $center><IconNudge $top={13}><CheckIcon /></IconNudge></Cell>
                <Cell><Body $ls={-0.06}>LOW BIRTH WEIGHT; PREMATURE NEWBORN (See Guideline Note 183)</Body></Cell>
                <Cell><Body>MEDICAL THERAPY</Body></Cell>
              </DataRow>
              <Details>
                {details.map((d, i) => (
                  <DetailRow key={d.name[0]} $first={i === 0}>
                    <DetailName>{d.name[0]}<br />{d.name[1]}</DetailName>
                    <Codes>
                      {d.codes.map((line) => (
                        <CodeLine key={line} $ls={codeSpacing[line[0]] || 0}>{line}</CodeLine>
                      ))}
                    </Codes>
                  </DetailRow>
                ))}
              </Details>
            </Table>
            <TableFoot>
              <Body $ls={0.12}>Showing 1 through 1 of 1 entries</Body>
              <Pager>
                <PageLink $w={194}>Previous</PageLink>
                <PageLink $w={84} $on>1</PageLink>
                <PageLink $w={133}>Next</PageLink>
              </Pager>
            </TableFoot>
          </Content>
          <Footer>
            <FooterCol $w="487px">PacificSource Health Plans<br /><b>Copyright © 2024</b></FooterCol>
            <FooterCol>
              <b>DISCLAIMER:</b> PacificSource expressly disclaims any and all liability connected with your use of this data and this website.
              <FooterLink>Read the Full Data Accuracy Disclaimer</FooterLink>
            </FooterCol>
          </Footer>
        </Page>
        <ScrollTrack>
          <ScrollArrow />
          <ScrollThumb><ThumbFill /></ScrollThumb>
          <ScrollArrow down />
        </ScrollTrack>
      </Viewport>

      <Taskbar>
        <StartButton><WinLogo /></StartButton>
        <SearchBox><SearchIcon /><span>Type here to search</span><StewArt /></SearchBox>
        <AppSlot $w={126}><TaskView /></AppSlot>
        <AppSlot><EdgeIcon /></AppSlot>
        <AppSlot $active><FirefoxIcon /><RunBar $x={2} $w={111} /><RunBar $x={113} $w={10} $soft /></AppSlot>
        <AppSlot><SnipIcon /></AppSlot>
        <AppSlot><FolderIcon /><RunBar $x={12} $w={81} /><RunBar $x={93} $w={20} $soft /></AppSlot>
        <AppSlot><M2Icon /></AppSlot>
        <AppSlot><VsIcon /></AppSlot>
        <AppSlot><NotepadIcon /></AppSlot>
        <AppSlot><MovieIcon /></AppSlot>
        <AppSlot><AtomIcon /><RunBar $x={12} $w={101} /></AppSlot>
        <Tray>
          <Weather><CloudIcon /><span>43°F</span><span>Cloudy</span></Weather>
          <TrayItem $ml={61}>
            <svg width="34" height="19" viewBox="0 0 34 19"><path d="M1 18L17 2L33 18" fill="none" stroke="#111" strokeWidth="2.200" /></svg>
          </TrayItem>
          <TrayItem $ml={42}><TrayMonitor /></TrayItem>
          <TrayItem $ml={39} $down={3}><Battery /></TrayItem>
          <TrayItem $ml={45} $down={4}><Wifi /></TrayItem>
          <TrayItem $ml={39}><Speaker /></TrayItem>
          <Clock>9:54 AM<br />3/5/2024</Clock>
          <TrayItem $ml={42}><NoteIcon /><NoteBadge>3</NoteBadge></TrayItem>
          <PeekLine />
        </Tray>
      </Taskbar>
    </Screen>
  );
}
